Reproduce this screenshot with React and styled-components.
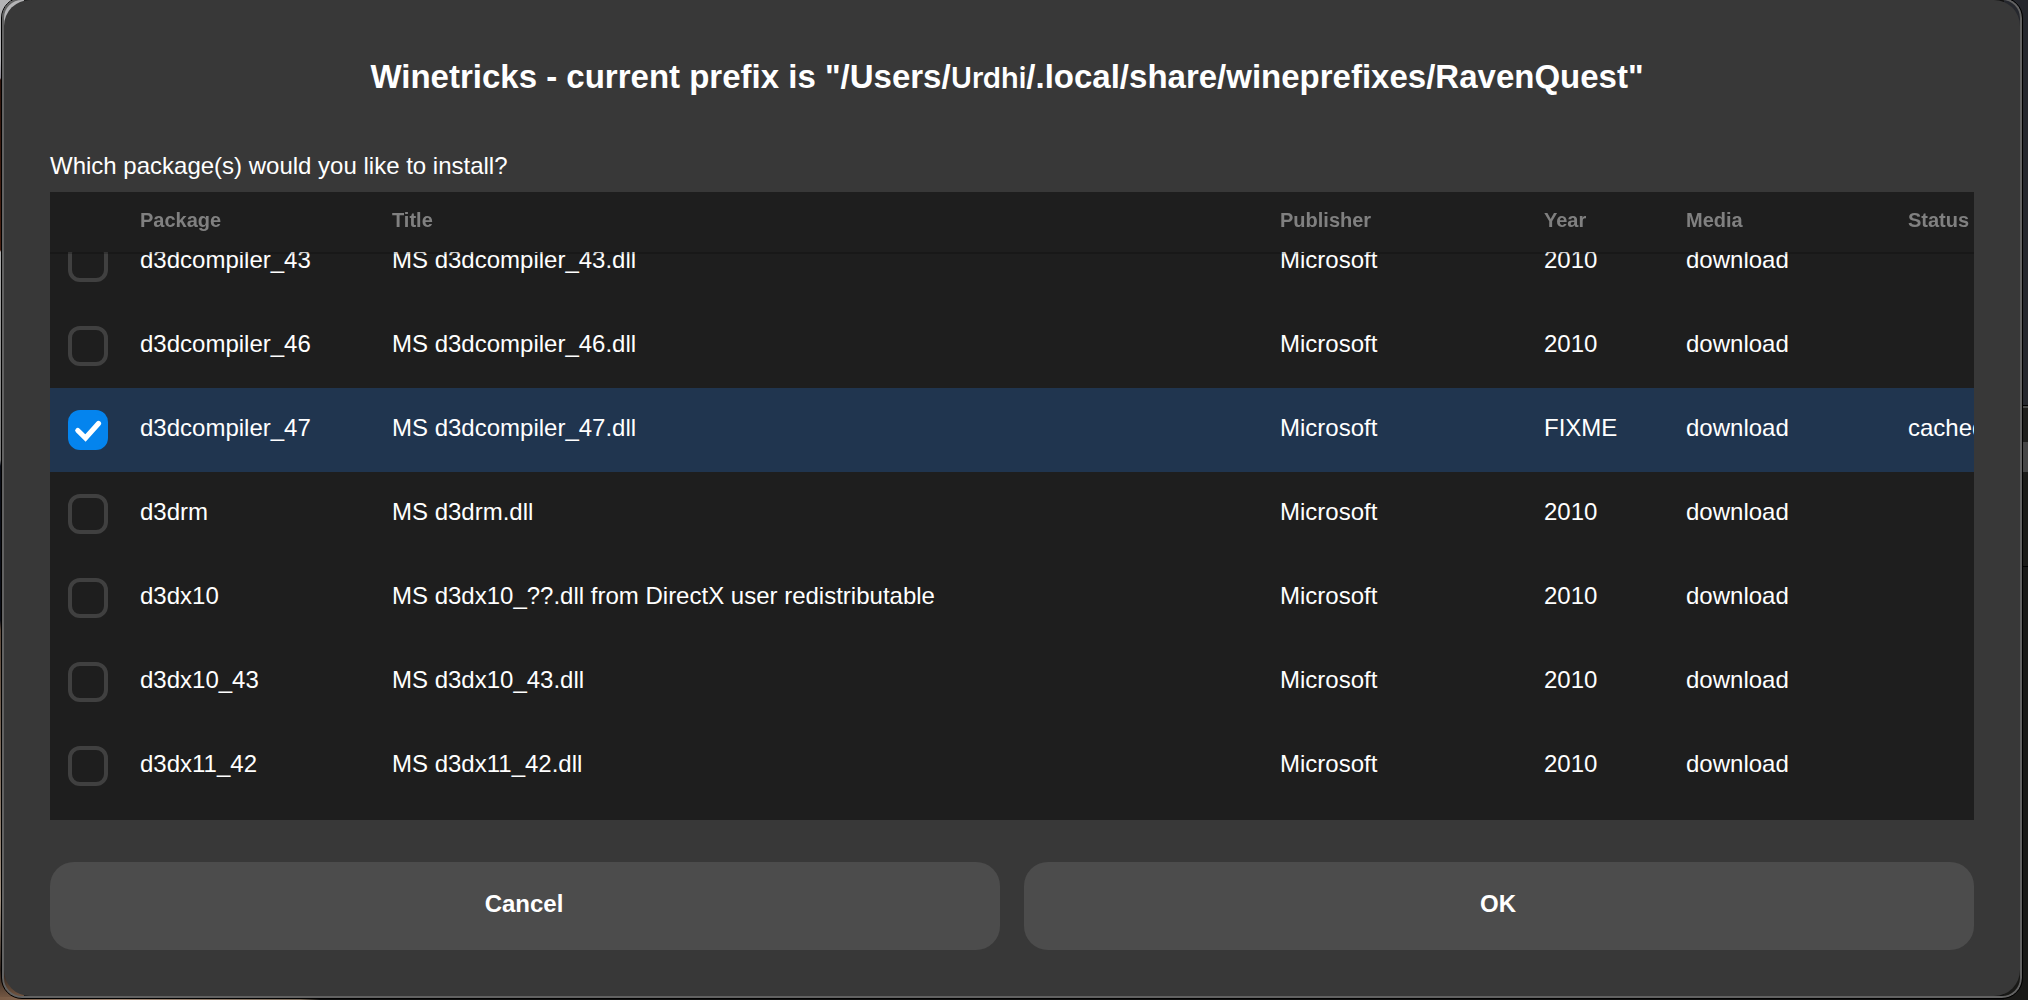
import React, { useLayoutEffect, useRef, useState } from "react";
import styled, { createGlobalStyle } from "styled-components";

const GlobalStyle = createGlobalStyle`
  * { box-sizing: border-box; }
  body {
    margin: 0;
    color: #fff;
    font-family: "Liberation Sans", Arial, sans-serif;
    font-size: 24px;
    line-height: 32px;
  }
`;

const Desktop = styled.div`
  display: flex;
  height: 100vh;
  min-height: 600px;
  padding: 0 5px 1px 1px;
  overflow: hidden;
  background:
    linear-gradient(#25272d 0 405px, #000 405px 406px, #4c4c4a 406px 408px, #1e1e1c 408px 442px, #454545 442px 472px, #1b1b18 472px 566px, #000 566px 567px, #191917 567px) right / 24px 100% no-repeat,
    linear-gradient(90deg, #7a5c46, #a88c78 120px, #80705f 300px, #111 320px) left bottom / 100% 3px no-repeat,
    linear-gradient(#b4b4b6 0 60px, #8c8790 78px, #30160e 80px, #4a2214 250px, #aaa 252px, #777 460px, #0c0f18 466px 620px, #5d4a3c 630px, #a09080 900px, #2c211b 970px, #7a5c46) left / 24px 100% no-repeat,
    #111;
`;

const Frame = styled.div`
  display: flex;
  flex: 1;
  min-width: 0;
  margin-top: -3px;
  padding: 2px;
  border: 1px solid #000;
  border-radius: 21px;
  box-shadow: inset 0 0 0 2px #626262;
`;

const Dialog = styled.form`
  display: flex;
  flex: 1;
  flex-direction: column;
  min-width: 0;
  padding: 57px 46px 46px;
  border-radius: 26px;
  background: #383838;
`;

const Heading = styled.h1`
  margin: 0;
  padding-right: 10px;
  font-size: 33px;
  line-height: 40px;
  text-align: center;
`;

const UserName = styled.span`
  font-family: Inter, "Liberation Sans", sans-serif;
  font-size: 29px;
  font-weight: 600;
  line-height: 32px;
`;

const Question = styled.p`
  margin: 53px 0 10px;
`;

const Scroller = styled.div`
  flex: 1;
  min-height: 0;
  padding-bottom: 12px;
  overflow: hidden auto;
  scrollbar-width: none;
  background: #1e1e1e;
`;

const Packages = styled.table`
  width: calc(100% + 20px);
  table-layout: fixed;
  border-collapse: separate;
  border-spacing: 0;
`;

const Column = styled.col`
  width: ${({ $width }) => ($width ? `${$width}px` : "auto")};
`;

const HeadCell = styled.th`
  position: sticky;
  top: 0;
  z-index: 1;
  height: 60px;
  padding: 0 0 4px;
  background: #1e1e1e;
  box-shadow: 0 2px 0 rgba(0, 0, 0, 0.2);
  color: #808080;
  font-size: 20px;
  line-height: 24px;
  text-align: left;
`;

const Row = styled.tr`
  background: ${({ $selected }) => ($selected ? "#20354f" : "#1e1e1e")};
`;

const Cell = styled.td`
  height: 84px;
  padding: 0 0 4px;
  white-space: nowrap;
`;

const CheckCell = styled.td`
  height: 84px;
  padding: 0 0 0 18px;
`;

const CheckBox = styled.span`
  display: grid;
  width: 40px;
  height: 40px;

  > * { grid-area: 1 / 1; }
`;

const CheckInput = styled.input`
  width: 40px;
  height: 40px;
  margin: 0;
  appearance: none;
  border: 4px solid #404040;
  border-radius: 12px;

  &:checked {
    border-color: #0484ee;
    background: #0484ee;
  }
`;

const Tick = styled.svg`
  width: 40px;
  height: 40px;
  pointer-events: none;
`;

const Actions = styled.div`
  display: flex;
  gap: 24px;
  margin-top: 42px;
`;

const ActionButton = styled.button`
  flex: 1;
  height: 88px;
  padding: 0 2px 4px 0;
  border: 0;
  border-radius: 24px;
  background: #4c4c4c;
  color: #fff;
  font: inherit;
  font-weight: 700;
`;

const columns = [
  { label: "Package", width: 252 },
  { label: "Title" },
  { label: "Publisher", width: 264 },
  { label: "Year", width: 142 },
  { label: "Media", width: 222 },
  { label: "Status", width: 86 },
];

const packages = [
  { name: "d3dcompiler_43", title: "MS d3dcompiler_43.dll", year: "2010" },
  { name: "d3dcompiler_46", title: "MS d3dcompiler_46.dll", year: "2010" },
  { name: "d3dcompiler_47", title: "MS d3dcompiler_47.dll", year: "FIXME", status: "cached" },
  { name: "d3drm", title: "MS d3drm.dll", year: "2010" },
  { name: "d3dx10", title: "MS d3dx10_??.dll from DirectX user redistributable", year: "2010" },
  { name: "d3dx10_43", title: "MS d3dx10_43.dll", year: "2010" },
  { name: "d3dx11_42", title: "MS d3dx11_42.dll", year: "2010" },
];

function PackageRow({ item, checked, onToggle }) {
  return (
    <Row $selected={checked}>
      <CheckCell>
        <CheckBox>
          <CheckInput type="checkbox" id={item.name} checked={checked} onChange={onToggle} />
          {checked && (
            <Tick viewBox="0 0 40 40" aria-hidden="true">
              <path d="M9.8 20.5 17.5 28 30.5 13.5" fill="none" stroke="#fff" strokeWidth="5.2" strokeLinecap="round" />
            </Tick>
          )}
        </CheckBox>
      </CheckCell>
      <Cell><label htmlFor={item.name}>{item.name}</label></Cell>
      <Cell>{item.title}</Cell>
      <Cell>Microsoft</Cell>
      <Cell>{item.year}</Cell>
      <Cell>download</Cell>
      <Cell>{item.status}</Cell>
    </Row>
  );
}

export default function App() {
  const scroller = useRef(null);
  const [chosen, setChosen] = useState(["d3dcompiler_47"]);

  useLayoutEffect(() => {
    scroller.current.scrollTop = 32;
  }, []);

  const toggle = (name) =>
    setChosen((list) => (list.includes(name) ? list.filter((n) => n !== name) : [...list, name]));

  return (
    <>
      <GlobalStyle />
      <Desktop>
        <Frame>
          <Dialog onSubmit={(event) => event.preventDefault()}>
            <Heading>
              Winetricks - current prefix is "/Users/<UserName>Urdhi</UserName>/.local/share/wineprefixes/RavenQuest"
            </Heading>
            <Question>Which package(s) would you like to install?</Question>
            <Scroller ref={scroller}>
              <Packages>
                <colgroup>
                  <Column $width={90} />
                  {columns.map((c) => <Column key={c.label} $width={c.width} />)}
                </colgroup>
                <thead>
                  <tr>
                    <HeadCell />
                    {columns.map((c) => <HeadCell key={c.label} scope="col">{c.label}</HeadCell>)}
                  </tr>
                </thead>
                <tbody>
                  {packages.map((item) => (
                    <PackageRow
                      key={item.name}
                      item={item}
                      checked={chosen.includes(item.name)}
                      onToggle={() => toggle(item.name)}
                    />
                  ))}
                </tbody>
              </Packages>
            </Scroller>
            <Actions>
              <ActionButton type="button">Cancel</ActionButton>
              <ActionButton type="submit">OK</ActionButton>
            </Actions>
          </Dialog>
        </Frame>
      </Desktop>
    </>
  );
}
